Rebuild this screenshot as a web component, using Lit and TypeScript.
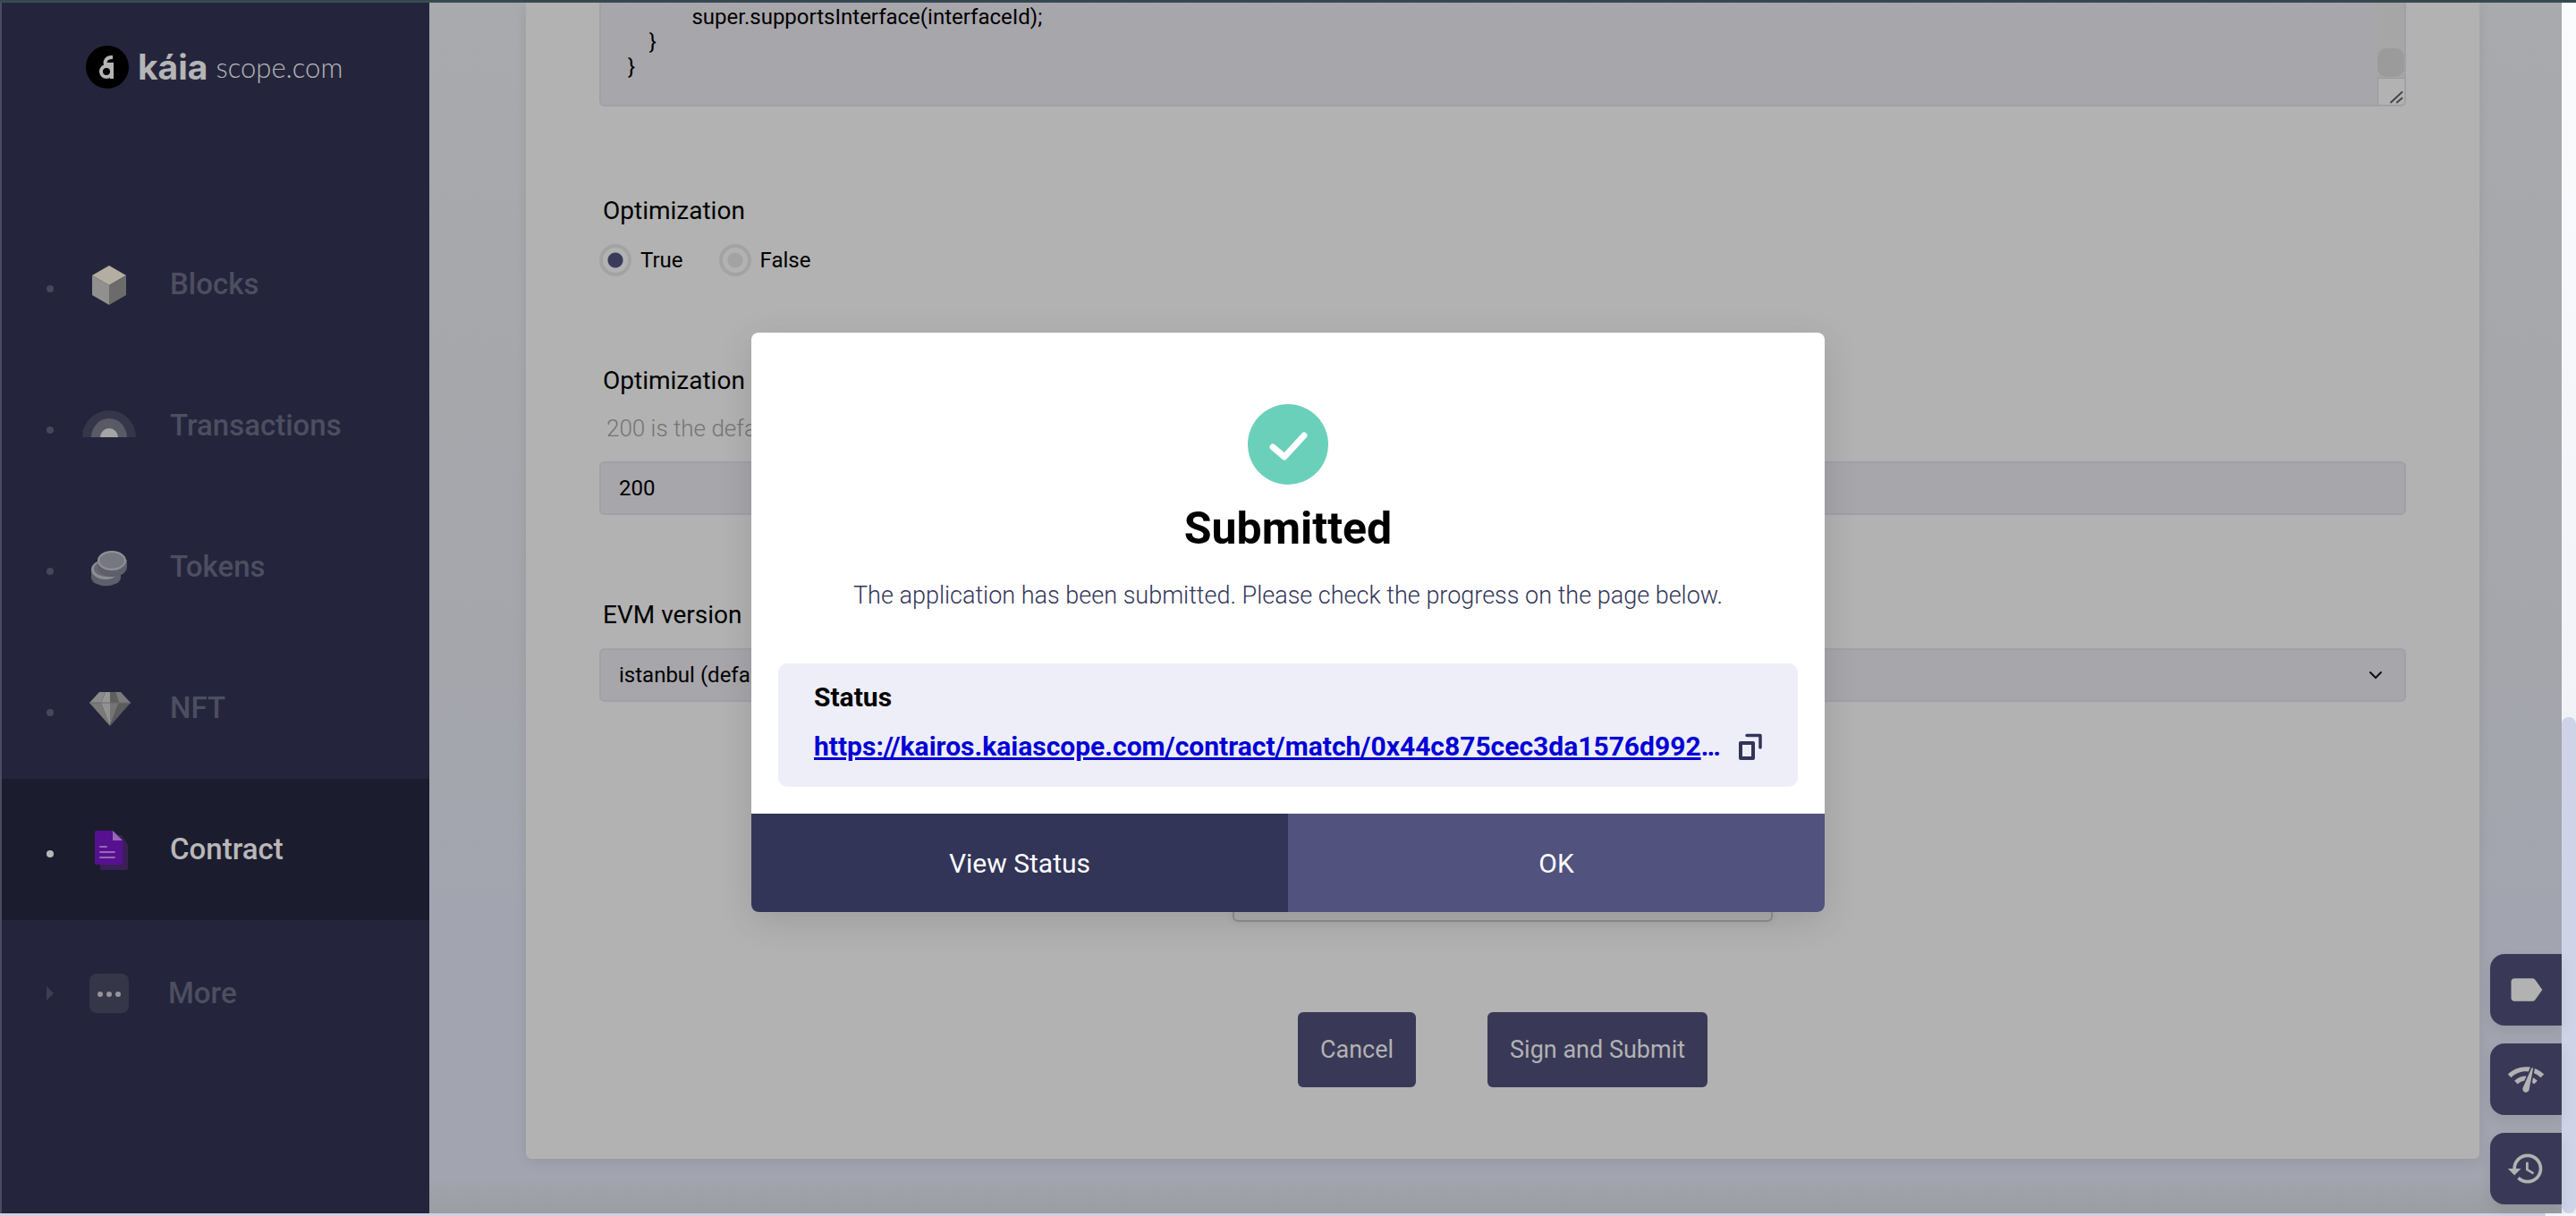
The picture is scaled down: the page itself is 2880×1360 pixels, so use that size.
import { LitElement, html, svg, css, nothing } from "lit";
import { customElement, property } from "lit/decorators.js";
import { classMap } from "lit/directives/class-map.js";

const cube = svg`
  <svg width="64" height="64" viewBox="0 0 64 64" aria-hidden="true">
    <path d="M32 11 L51 22 L32 33 L13 22Z" fill="#b3ada2" />
    <path d="M13 22 L32 33 V55 L13 44Z" fill="#92908f" />
    <path d="M51 22 L32 33 V55 L51 44Z" fill="#6b6b6b" />
  </svg>`;

const arcs = svg`
  <svg width="64" height="64" viewBox="0 0 64 64" aria-hidden="true">
    <path d="M2 45 a30 30 0 0 1 60 0Z" fill="#35364a" />
    <path d="M12 45 a20 21 0 0 1 40 0Z" fill="#595a66" />
    <path d="M22 45 a10 10 0 0 1 20 0Z" fill="#a5a5a5" />
  </svg>`;

const coins = svg`
  <svg width="64" height="64" viewBox="0 0 64 64" aria-hidden="true">
    <path d="M12 36 v8 a16 9 0 0 0 33 0 v-8Z" fill="#5d5f6b" />
    <ellipse cx="28" cy="35" rx="16" ry="11" fill="#8d8d94" />
    <ellipse cx="29" cy="34" rx="14" ry="9" fill="#686873" />
    <path d="M19 24 v8 a16 11 0 0 0 33 0 v-8Z" fill="#5d5f6b" />
    <ellipse cx="35" cy="25" rx="16" ry="11" fill="#92929a" />
    <ellipse cx="35" cy="25" rx="14" ry="9" fill="#777781" />
  </svg>`;

const diamond = svg`
  <svg width="64" height="64" viewBox="0 0 64 64" aria-hidden="true">
    <path d="M21 14 H28 L23 26 H10Z" fill="#8a8a8a" />
    <path d="M28 14 H33 V26 H23Z" fill="#969696" />
    <path d="M33 14 H39 L43 26 H33Z" fill="#5f5f5f" />
    <path d="M39 14 H45 L56 26 H43Z" fill="#7b7b7b" />
    <path d="M10 26 H23 L33 52Z" fill="#7a7a7a" />
    <path d="M23 26 H33 V52Z" fill="#929292" />
    <path d="M33 26 H43 L33 52Z" fill="#747474" />
    <path d="M43 26 H56 L33 52Z" fill="#5c5c5c" />
    <path d="M10 26 H56" stroke="#6b6b72" />
  </svg>`;

const paper = svg`
  <svg width="64" height="64" viewBox="0 0 64 64" aria-hidden="true">
    <path d="M22 16 H46 L53 27 V53 a2 2 0 0 1 -2 2 H24 a2 2 0 0 1 -2 -2Z" fill="#3a2056" />
    <path d="M18 11 H36 L47 22 V47 a2 2 0 0 1 -2 2 H18 a2 2 0 0 1 -2 -2 V13 a2 2 0 0 1 2 -2Z" fill="#561190" />
    <path d="M36 11 L47 22 H36Z" fill="#9868b4" />
    <path d="M22 29 H29 M22 35 H38 M22 41 H38" stroke="#9868b4" stroke-width="2" stroke-linecap="round" />
  </svg>`;

const more = svg`
  <svg width="64" height="64" viewBox="0 0 64 64" aria-hidden="true">
    <rect x="10" y="10" width="44" height="44" rx="8" fill="#353648" />
    <circle cx="22" cy="33" r="3" fill="#95959b" />
    <circle cx="32" cy="33" r="3" fill="#95959b" />
    <circle cx="42" cy="33" r="3" fill="#95959b" />
  </svg>`;

interface NavItem {
  label: string;
  icon: unknown;
  active?: boolean;
  group?: boolean;
}

const NAV: NavItem[] = [
  { label: "Blocks", icon: cube },
  { label: "Transactions", icon: arcs },
  { label: "Tokens", icon: coins },
  { label: "NFT", icon: diamond },
  { label: "Contract", icon: paper, active: true },
  { label: "More", icon: more, group: true },
];

@customElement("scope-sidebar")
class ScopeSidebar extends LitElement {
  static styles = css`
    :host {
      display: flex;
      flex-direction: column;
      background: #24253c;
      color: #4d4e60;
      font-family: Roboto, "Liberation Sans", sans-serif;
    }
    .logo {
      display: flex;
      align-items: center;
      height: 144px;
      margin-bottom: 92px;
      padding-left: 94px;
      color: #b5b5b5;
      text-decoration: none;
      line-height: 40px;
    }
    .brand {
      margin-left: 10px;
      font-family: Inter, "Liberation Sans", sans-serif;
      font-size: 39px;
      font-weight: 700;
    }
    .suffix {
      margin-left: 9px;
      font-family: Lato, "Liberation Sans", sans-serif;
      font-size: 31px;
      font-weight: 300;
    }
    .item {
      display: flex;
      align-items: center;
      height: 158px;
      padding-left: 50px;
      color: inherit;
      text-decoration: none;
      font-size: 33px;
      font-weight: 500;
      line-height: 40px;
    }
    .item.active {
      background: #1c1c2f;
      color: #b8b8b8;
    }
    .item.group {
      height: 164px;
    }
    .dot {
      width: 8px;
      height: 8px;
      margin: 10px 30px 0 0;
      border-radius: 50%;
      background: #46475a;
    }
    .active .dot {
      background: #b8b8b8;
    }
    .caret {
      margin-right: 30px;
      border-left: 8px solid #3d3e52;
      border-top: 8px solid transparent;
      border-bottom: 8px solid transparent;
    }
    .item svg {
      margin-right: 36px;
    }
    .group svg {
      margin-right: 34px;
    }
  `;

  render() {
    return html`
      <a class="logo" href="#">
        <svg width="48" height="48" viewBox="0 0 48 48" aria-hidden="true">
          <circle cx="24" cy="24" r="24" fill="#000" />
          <g fill="none" stroke="#b5b5b5" stroke-width="4">
            <circle cx="23" cy="29" r="6" />
            <path d="M29 21 V37 M31 21 H22 a3.4 4 0 0 1 0 -4 q1.5 -4 8 -4" />
          </g>
        </svg>
        <span class="brand">káia</span><span class="suffix">scope.com</span>
      </a>
      <nav>
        ${NAV.map(
          (n) => html`<a
            class=${classMap({ item: true, active: !!n.active, group: !!n.group })}
            href="#"
            aria-current=${n.active ? "page" : nothing}
            ><span class=${n.group ? "caret" : "dot"}></span>${n.icon}<span>${n.label}</span></a
          >`
        )}
      </nav>
    `;
  }
}

@customElement("contract-form")
class ContractForm extends LitElement {
  static styles = css`
    :host {
      display: flex;
      flex-direction: column;
      padding: 0 82px 80px;
      border-radius: 0 0 6px 6px;
      background: #b2b2b2;
      box-shadow: 0 4px 14px rgba(0, 0, 0, 0.08);
      color: #000;
      font-family: Roboto, "Liberation Sans", sans-serif;
      font-size: 24px;
      line-height: 28px;
    }
    * {
      box-sizing: border-box;
    }
    .source {
      display: flex;
      height: 116px;
      border: 2px solid #a0a0a8;
      border-top: 0;
      border-radius: 0 0 6px 6px;
      background: #a7a6ab;
      overflow: hidden;
    }
    textarea {
      flex: 1;
      padding: 2px 30px 28px;
      border: 0;
      background: none;
      color: inherit;
      font: inherit;
      resize: none;
      overflow: hidden;
    }
    .bar {
      display: flex;
      flex-direction: column;
      justify-content: flex-end;
      width: 30px;
      background: #a6a6a6;
    }
    .thumb {
      height: 32px;
      margin-bottom: 1px;
      border-radius: 10px;
      background: #9b9b9b;
    }
    .grip {
      display: block;
      border-left: 1px solid #98989c;
      border-top: 1px solid #98989c;
      background: #b2b2b2;
    }
    .group {
      display: flex;
      flex-direction: column;
      align-items: stretch;
      gap: 21px;
      margin: 101px 0 0;
      padding: 0;
      border: 0;
    }
    .group.tight {
      margin-top: 96px;
    }
    .title {
      padding: 0 4px;
      font-size: 28px;
      line-height: 32px;
    }
    .hint {
      margin: 0;
      padding: 0 8px;
      color: #747474;
      font-size: 26px;
      font-weight: 300;
      line-height: 32px;
    }
    .radios {
      display: flex;
      gap: 40px;
    }
    .radio {
      display: flex;
      align-items: center;
      gap: 10px;
    }
    .radio input {
      appearance: none;
      width: 36px;
      height: 36px;
      margin: 0;
      padding: 6px;
      border: 4px solid #a3a3a3;
      border-radius: 50%;
      background: radial-gradient(circle, #a3a3a3 8px, transparent 9px);
    }
    .radio input:checked {
      background: radial-gradient(circle, #3a3a5a 8px, transparent 9px);
    }
    .control {
      width: 100%;
      height: 60px;
      padding: 0 20px;
      border: 2px solid #a0a0a8;
      border-radius: 6px;
      background: #a7a6ab;
      color: inherit;
      font: inherit;
      appearance: none;
    }
    .select {
      display: grid;
      align-items: center;
    }
    .select > * {
      grid-area: 1 / 1;
    }
    .select svg {
      justify-self: end;
      margin-right: 24px;
      pointer-events: none;
    }
    .captcha {
      align-self: center;
      width: 604px;
      height: 152px;
      margin-top: 94px;
      border: 2px solid #8f8f8f;
      border-radius: 6px;
      background: #adadad;
      box-shadow: 0 0 8px rgba(0, 0, 0, 0.08);
    }
    .actions {
      display: flex;
      justify-content: center;
      gap: 80px;
      margin-top: 101px;
    }
    .actions button {
      height: 84px;
      padding: 0 25px;
      border: 0;
      border-radius: 6px;
      background: #393957;
      color: #b2b2b2;
      font: inherit;
      font-size: 27px;
    }
  `;

  render() {
    const source = `            super.supportsInterface(interfaceId);\n    }\n}`;
    return html`
      <div class="source">
        <textarea aria-label="Source code" spellcheck="false" .value=${source}></textarea>
        <div class="bar" aria-hidden="true">
          <div class="thumb"></div>
          <svg class="grip" width="30" height="30" viewBox="0 0 30 30">
            <path d="M14 28 L28 15 M21 28 L28 22" stroke="#444" stroke-width="2" fill="none" />
          </svg>
        </div>
      </div>

      <div class="group" role="radiogroup" aria-labelledby="opt">
        <span class="title" id="opt">Optimization</span>
        <div class="radios">
          <label class="radio"><input type="radio" name="optimize" checked />True</label>
          <label class="radio"><input type="radio" name="optimize" />False</label>
        </div>
      </div>

      <div class="group">
        <label class="title" for="runs">Optimization</label>
        <p class="hint">200 is the default value</p>
        <input class="control" id="runs" type="text" value="200" />
      </div>

      <div class="group tight">
        <label class="title" for="evm">EVM version</label>
        <div class="select">
          <select class="control" id="evm">
            <option>istanbul (default)</option>
          </select>
          <svg width="20" height="12" viewBox="0 0 20 12" aria-hidden="true">
            <path d="M4 3 L10 9 L16 3" fill="none" stroke="#111" stroke-width="2" stroke-linecap="round" />
          </svg>
        </div>
      </div>

      <div class="captcha"></div>
      <div class="actions">
        <button type="button">Cancel</button>
        <button type="button">Sign and Submit</button>
      </div>
    `;
  }
}

@customElement("submitted-dialog")
class SubmittedDialog extends LitElement {
  @property() link = "https://kairos.kaiascope.com/contract/match/0x44c875cec3da1576d992";

  static styles = css`
    :host {
      display: flex;
      flex-direction: column;
      width: 1200px;
      max-width: 100%;
      border-radius: 8px;
      background: #fff;
      box-shadow: 0 10px 40px rgba(0, 0, 0, 0.12);
      overflow: hidden;
      color: #000;
      font-family: Roboto, "Liberation Sans", sans-serif;
    }
    .body {
      display: flex;
      flex-direction: column;
      align-items: center;
      padding: 80px 30px 30px;
    }
    h2 {
      margin: 19px 0 0;
      font-size: 50px;
      font-weight: 700;
      line-height: 60px;
    }
    p {
      margin: 29px 0 0;
      color: #323558;
      font-size: 27px;
      font-weight: 300;
      line-height: 32px;
    }
    .status {
      align-self: stretch;
      margin-top: 60px;
      padding: 21px 40px 27px;
      border-radius: 10px;
      background: #eeeef8;
      font-weight: 700;
    }
    .status h3 {
      margin: 0;
      font-size: 30px;
      font-weight: 700;
      line-height: 34px;
    }
    .row {
      display: flex;
      align-items: center;
      justify-content: space-between;
      margin-top: 20px;
    }
    .row a {
      color: #0000d6;
      font-size: 30px;
      line-height: 36px;
      text-decoration: none;
      white-space: nowrap;
    }
    .url {
      text-decoration: underline;
    }
    .copy {
      display: flex;
      padding: 0;
      border: 0;
      background: none;
    }
    .foot {
      display: grid;
      grid-template-columns: 1fr 1fr;
    }
    .foot button {
      height: 110px;
      border: 0;
      background: #323558;
      color: #fff;
      font: inherit;
      font-size: 30px;
    }
    .foot .ok {
      background: #51527e;
    }
  `;

  render() {
    return html`
      <div class="body">
        <svg width="90" height="90" viewBox="0 0 90 90" aria-hidden="true">
          <circle cx="45" cy="45" r="45" fill="#6ad0ba" />
          <path
            d="M28 48 L41 59 L63 35"
            fill="none"
            stroke="#fff"
            stroke-width="7"
            stroke-linecap="round"
            stroke-linejoin="round"
          />
        </svg>
        <h2 id="heading">Submitted</h2>
        <p>The application has been submitted. Please check the progress on the page below.</p>
        <section class="status">
          <h3>Status</h3>
          <div class="row">
            <a href=${this.link}><span class="url">${this.link}</span>…</a>
            <button class="copy" type="button" aria-label="Copy">
              <svg width="28" height="30" viewBox="0 0 28 30" fill="none" stroke="#323558" stroke-width="4" stroke-linejoin="round" stroke-linecap="round">
                <rect x="4" y="11" width="14" height="17" />
                <path d="M11 2.5 H26 V16" stroke-width="3.5" />
              </svg>
            </button>
          </div>
        </section>
      </div>
      <div class="foot">
        <button type="button">View Status</button>
        <button class="ok" type="button">OK</button>
      </div>
    `;
  }
}

const TOOLS = [
  {
    label: "Labels",
    d: "M17.63 5.84C17.27 5.33 16.67 5 16 5L5 5.01C3.9 5.01 3 5.9 3 7v10c0 1.1.9 1.99 2 1.99L16 19c.67 0 1.27-.33 1.63-.84L22 12l-4.37-6.16z",
  },
  {
    label: "Network",
    d: "M15.9 5c-.17 0-.32.09-.41.23l-.07.15-5.18 11.65c-.16.29-.26.61-.26.96 0 1.11.9 2.01 2.01 2.01.96 0 1.77-.68 1.96-1.59l.01-.03L16.4 5.5c0-.28-.22-.5-.5-.5zM1 9l2 2c2.88-2.88 6.79-4.08 10.53-3.62l1.19-2.68C9.89 3.84 4.74 5.27 1 9zm20 2l2-2c-1.64-1.64-3.55-2.82-5.59-3.57l-.53 2.82c1.5.62 2.9 1.53 4.12 2.75zm-4 4l2-2c-.8-.8-1.7-1.42-2.66-1.89l-.55 2.92c.42.27.83.59 1.21.97zM5 13l2 2c1.13-1.13 2.56-1.79 4.03-2l1.28-2.88c-2.63-.08-5.3.87-7.31 2.88z",
  },
  {
    label: "History",
    d: "M13 3c-4.97 0-9 4.03-9 9H1l3.89 3.89.07.14L9 12H6c0-3.87 3.13-7 7-7s7 3.13 7 7-3.13 7-7 7c-1.93 0-3.68-.79-4.94-2.06l-1.42 1.42C8.27 19.99 10.51 21 13 21c4.97 0 9-4.03 9-9s-4.03-9-9-9zm-1 5v5l4.28 2.54.72-1.21-3.5-2.08V8H12z",
  },
];

@customElement("app-root")
class AppRoot extends LitElement {
  static styles = css`
    :host {
      display: flex;
      flex-direction: column;
      position: relative;
      min-height: 100vh;
      font-family: Roboto, "Liberation Sans", sans-serif;
    }
    * {
      box-sizing: border-box;
    }
    .edge-top {
      height: 3px;
      background: linear-gradient(#2f4650, #434e53);
    }
    .shell {
      display: flex;
      flex: 1;
      border-left: 2px solid #4b4c60;
    }
    scope-sidebar {
      width: 478px;
      flex: none;
    }
    main {
      flex: 1;
      padding: 0 92px 60px 108px;
      background: linear-gradient(#a9aaad, #a5a6ab 50%, #a2a5af 75%, #a2a5af 97%, #9b9da3);
    }
    .scroll {
      display: flex;
      flex-direction: column;
      justify-content: flex-end;
      width: 16px;
      background: linear-gradient(#fafbfc, #ebedf7);
    }
    .thumb {
      height: 41%;
      border-radius: 8px;
      background: #cfd3e8;
    }
    .edge-bottom {
      height: 3px;
      padding-right: 34px;
      background: #f5f6fa;
    }
    .track {
      height: 100%;
      border-radius: 0 3px 3px 0;
      background: #cfd1e2;
    }
    .tools {
      position: absolute;
      right: 16px;
      bottom: 13px;
      display: flex;
      flex-direction: column;
      gap: 20px;
    }
    .tools button {
      display: grid;
      place-items: center;
      width: 80px;
      height: 80px;
      padding: 0;
      border: 0;
      border-radius: 16px 0 0 16px;
      background: #393957;
      box-shadow: 0 6px 14px rgba(0, 0, 0, 0.08);
      color: #b2b2b2;
    }
    .overlay {
      position: absolute;
      inset: 0;
      display: flex;
      align-items: center;
      justify-content: center;
      padding-top: 32px;
    }
  `;

  render() {
    return html`
      <div class="edge-top"></div>
      <div class="shell">
        <scope-sidebar></scope-sidebar>
        <main><contract-form></contract-form></main>
        <div class="scroll" aria-hidden="true"><div class="thumb"></div></div>
      </div>
      <div class="edge-bottom" aria-hidden="true"><div class="track"></div></div>
      <div class="tools">
        ${TOOLS.map(
          (t) => html`<button type="button" aria-label=${t.label}>
            <svg width="44" height="44" viewBox="0 0 24 24" fill="currentColor"><path d=${t.d} /></svg>
          </button>`
        )}
      </div>
      <div class="overlay">
        <submitted-dialog role="dialog" aria-modal="true" aria-label="Submitted"></submitted-dialog>
      </div>
    `;
  }
}
